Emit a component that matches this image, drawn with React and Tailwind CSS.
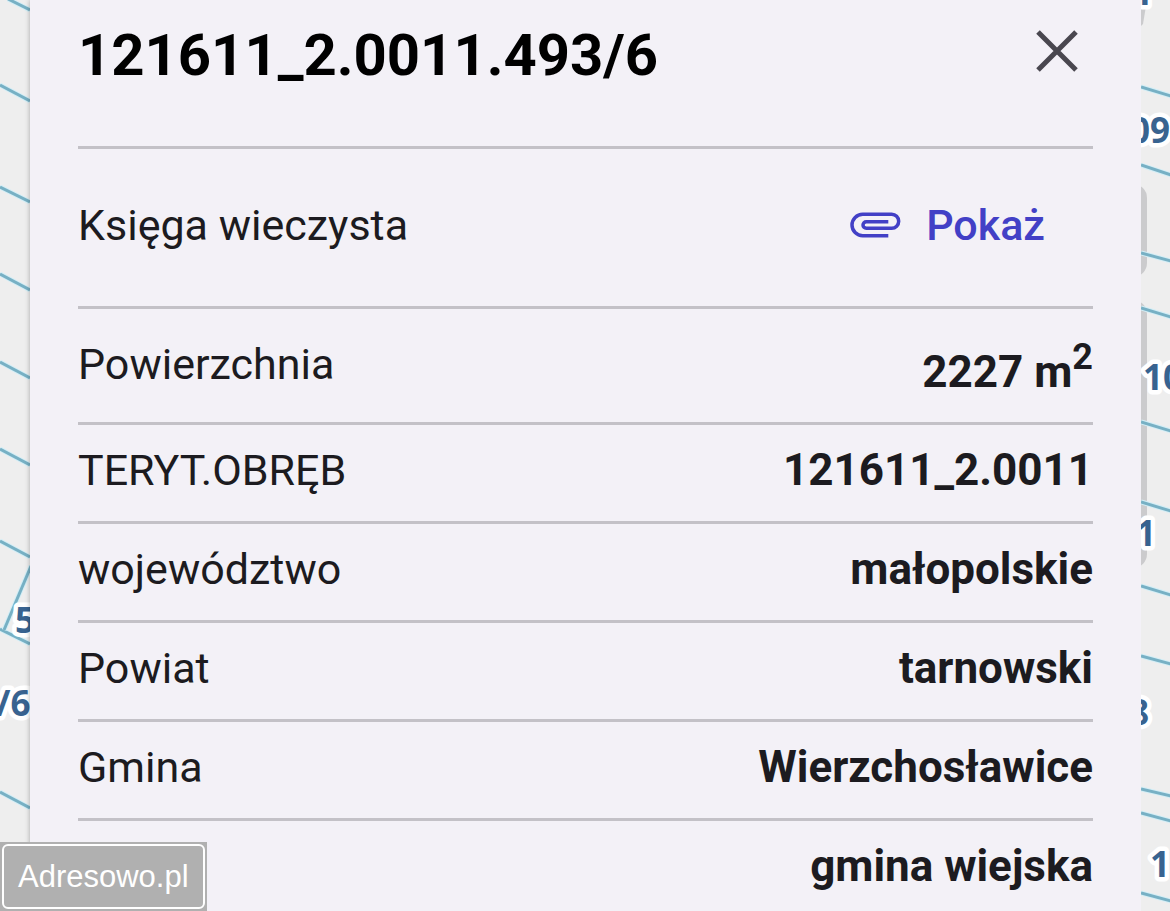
const rows = [
  { label: 'TERYT.OBRĘB', value: '121611_2.0011' },
  { label: 'województwo', value: 'małopolskie' },
  { label: 'Powiat', value: 'tarnowski' },
  { label: 'Gmina', value: 'Wierzchosławice' },
  { label: '', value: 'gmina wiejska' },
]

// [x1, y1, x2, y2] parcel borders
const leftBorders = [
  [8, -1, 30, 10],
  [0, 85, 30, 101],
  [0, 187, 30, 202],
  [0, 274, 30, 290],
  [0, 362, 30, 378],
  [0, 449, 30, 465],
  [0, 541, 30, 557],
  [0, 629, 30, 644],
  [31, 566, 4, 630],
  [0, 792, 30, 808],
]

const rightBorders = [
  [0, 87, 30, 96],
  [0, 165, 30, 175],
  [0, 253, 30, 261],
  [0, 308, 30, 317],
  [0, 422, 30, 431],
  [0, 502, 30, 511],
  [0, 586, 30, 595],
  [0, 656, 30, 664],
  [0, 789, 30, 796],
  [0, 813, 30, 821],
  [0, 893, 30, 901],
]

const leftLabels = [
  { text: '5', x: 15, y: 633 },
  { text: '/6', x: -4, y: 716 },
]

const rightLabels = [
  { text: '1', x: -8, y: 5 },
  { text: '09', x: -11, y: 143 },
  { text: '10', x: 2, y: 390 },
  { text: '1', x: -5, y: 546 },
  { text: '8', x: -12, y: 725 },
  { text: '1', x: 9, y: 877 },
]

function MapStrip({ borders, labels, children }) {
  return (
    <div className="relative h-full overflow-hidden bg-[#eeeeee]">
      <svg className="absolute inset-0 h-full w-full" aria-hidden="true">
        {children}
        {borders.map(([x1, y1, x2, y2]) => (
          <g key={`${x1}-${y1}`}>
            <line x1={x1} y1={y1} x2={x2} y2={y2} stroke="#d3eef6" strokeWidth="5" />
            <line x1={x1} y1={y1} x2={x2} y2={y2} stroke="#77b0c4" strokeWidth="3" />
          </g>
        ))}
        {labels.map(({ text, x, y }) => (
          <text
            key={`${x}-${y}`}
            x={x}
            y={y}
            fill="#386390"
            stroke="#ffffff"
            strokeWidth="9"
            strokeLinejoin="round"
            paintOrder="stroke"
            className="font-['Open_Sans',sans-serif] text-[35px] font-bold"
          >
            {text}
          </text>
        ))}
      </svg>
    </div>
  )
}

function AttachmentIcon() {
  return (
    <svg width="52" height="28" viewBox="0 0 52 28" fill="none" stroke="currentColor" strokeWidth="3.5" aria-hidden="true">
      <path d="M38.3 24.7H12.7a10.7 10.7 0 0 1 0-21.4H41.7a7 7 0 0 1 0 14H16.3a3.3 3.3 0 0 1 0-6.6H38.3" />
    </svg>
  )
}

function CloseIcon() {
  return (
    <svg width="44" height="44" viewBox="0 0 44 44" fill="none" stroke="currentColor" strokeWidth="5" aria-hidden="true">
      <path d="M3 3L41 41M41 3L3 41" />
    </svg>
  )
}

function Row({ label, value }) {
  return (
    <div className="flex h-[99px] items-center justify-between border-t-3 border-[#c3c1c7] pb-1.5">
      <dt>{label}</dt>
      <dd className="text-[44px] font-bold">{value}</dd>
    </div>
  )
}

export default function App() {
  return (
    <div className="grid h-screen grid-cols-[30px_minmax(0,1fr)_29px] overflow-hidden font-[Roboto,sans-serif] text-[#1c1b20]">
      <MapStrip borders={leftBorders} labels={leftLabels} />

      <main className="relative bg-[#f3f1f7] px-12 shadow-[0_0_5px_rgba(0,0,0,0.3)]">
        <header className="flex h-[146px] items-start justify-between pt-5">
          <h1 className="text-[58px] leading-[70px] font-bold text-black">121611_2.0011.493/6</h1>
          <button type="button" aria-label="Zamknij" className="mt-[9px] mr-3.5 text-[#49474f]">
            <CloseIcon />
          </button>
        </header>

        <dl className="text-[43px] leading-[52px]">
          <div className="flex h-40 items-center justify-between border-t-3 border-[#c3c1c7] pb-1.5">
            <dt>Księga wieczysta</dt>
            <dd className="pr-12">
              <button type="button" className="flex items-center gap-6 font-medium text-[#4240c6]">
                <AttachmentIcon />
                Pokaż
              </button>
            </dd>
          </div>
          <div className="flex h-[116px] items-center justify-between border-t-3 border-[#c3c1c7] pb-1">
            <dt>Powierzchnia</dt>
            <dd className="pt-4 text-[44px] font-bold">
              2227 m<sup className="text-[36px]">2</sup>
            </dd>
          </div>
          {rows.map((row) => (
            <Row key={row.value} label={row.label} value={row.value} />
          ))}
        </dl>
      </main>

      <MapStrip borders={rightBorders} labels={rightLabels}>
        <path d="M-2 0H6L2 24L-2 28Z" fill="#cbcbcd" />
        <rect x="-30" y="184" width="36" height="93" rx="14" fill="#cbcbcd" />
        <rect x="-30" y="300" width="36" height="268" rx="14" fill="#cbcbcd" />
      </MapStrip>

      <a
        href="#adresowo"
        className="fixed bottom-0 left-0 bg-[#b0b0b0] p-0.5 font-['Liberation_Sans',sans-serif] text-[31px] leading-[61px] text-white"
      >
        <span className="block rounded-md border-2 border-white px-3.5">Adresowo.pl</span>
      </a>
    </div>
  )
}
